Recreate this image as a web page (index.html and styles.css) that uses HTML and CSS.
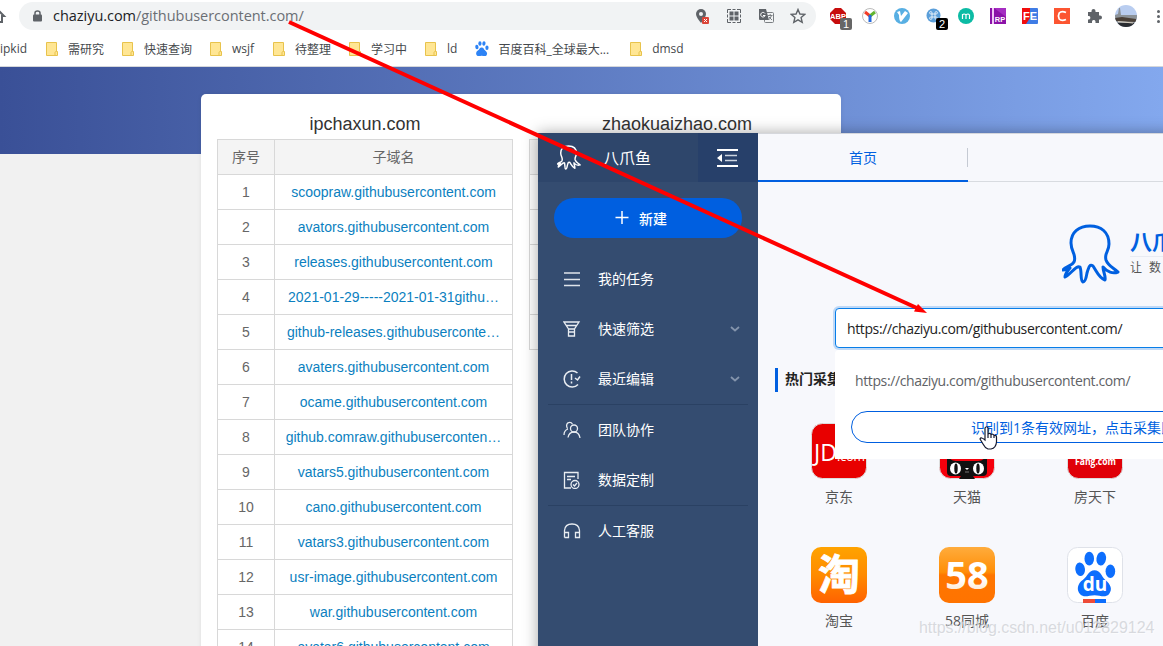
FILE: index.html
```html
<!DOCTYPE html>
<html lang="zh-CN">
<head>
    <meta charset="UTF-8">
    <meta name="viewport" content="width=device-width, initial-scale=1.0">
    <title>chaziyu.com/githubusercontent.com/</title>
    <link rel="stylesheet" href="styles.css">
</head>
<body>
    <svg class="defs" width="0" height="0">
        <symbol id="paw" viewBox="0 0 42 50">
            <ellipse cx="5" cy="19" rx="5" ry="7" transform="rotate(-8 5 19)"/>
            <ellipse cx="14.5" cy="8" rx="5" ry="7.2"/>
            <ellipse cx="27" cy="8" rx="5" ry="7.2" transform="rotate(8 27 8)"/>
            <ellipse cx="36.500" cy="21" rx="5" ry="7"/>
            <path d="M20 20C14 20 13 26 8 30C2 34 1 41 5 45C9 49 14 46 20 46C26 46 31 49 35 45C39 40 37 35 31 30C27 26 26 20 20 20Z"/>
        </symbol>
        <symbol id="octopus" viewBox="0 0 58 60">
            <path d="M12 38C15 31 9 28 9 19C9 8 17 2 28 2C39 2 47 8 47 20C47 28 42 29 44 36C46 42 52 44 56 48C51 50 45 48 41 43C41 48 44 52 43 56C37 54 35 48 31 42C28 40 27 42 25 49C24 55 23 58 21 58C18 57 20 48 18 43C14 41 9 50 3 53C3 49 6 47 8 44C5 46 3 46 1 46C4 42 10 42 12 38Z" fill="none" stroke="currentColor" stroke-linejoin="round"/>
        </symbol>
        <symbol id="folder" viewBox="0 0 12 14">
            <path d="M.5.500H10.500V9.500H11.500V13.500H.5Z" fill="#ffe694" stroke="#e8c34c"/>
            <path d="M9 13V10.500Q9 9.500 10.500 9.500" fill="none" stroke="#e8c34c"/>
        </symbol>
        <symbol id="chevron" viewBox="0 0 10 8">
            <path d="M1 2L5 5.500L9 2" fill="none" stroke="currentColor" stroke-width="1.800"/>
        </symbol>
    </svg>

    <!-- browser chrome -->
    <header class="browser">
        <div class="toolbar">
            <svg class="home" width="8" height="16" viewBox="0 0 8 16"><path d="M-6 8L-1 3L4 8H2V14H-1" fill="none" stroke="#5f6368" stroke-width="2"/></svg>
            <div class="omnibox">
                <svg class="lock" width="9" height="12" viewBox="0 0 9 12"><path d="M2 5V3Q2 1 4.500 1Q7 1 7 3V5" fill="none" stroke="#5f6368" stroke-width="1.500"/><rect y="4.500" width="9" height="7" rx="1" fill="#5f6368"/></svg>
                <div class="address">chaziyu.com<span>/githubusercontent.com/</span></div>
                <div class="page-actions">
                    <svg width="16" height="16" viewBox="0 0 16 16"><path d="M7 1A5 5 0 0 0 2 6Q2 9 7 15Q12 9 12 6A5 5 0 0 0 7 1Z" fill="#5f6368"/><circle cx="7" cy="6" r="2" fill="#f1f3f4"/><rect x="8" y="9" width="7" height="7" rx="1" fill="#db4437"/><path d="M10 11L13 14M13 11L10 14" stroke="#fff"/></svg>
                    <svg width="16" height="16" viewBox="0 0 16 16"><path d="M1.500 5V1.500H5M6.500 1.500H9.500M11 1.500H14.500V5M14.500 6.500V9.500M14.500 11V14.500H11M9.500 14.500H6.500M5 14.500H1.500V11M1.500 9.500V6.500" fill="none" stroke="#5f6368"/><path d="M3.500 3.500H7.500V7.500H3.500ZM8.500 3.500H12.500V7.500H8.500ZM3.500 8.500H7.500V12.500H3.500ZM8.500 8.500H12.500V12.500H8.500Z" fill="#5f6368"/></svg>
                    <svg width="16" height="16" viewBox="0 0 16 16"><rect x="6.500" y="4.500" width="9" height="10" rx="1" fill="#f1f3f4" stroke="#7b7f83"/><path d="M1 1H8L11 12H2Q1 12 1 11Z" fill="#5f6368"/><path d="M7 5.500A2.300 2.300 0 1 0 7.200 7.500H5" fill="none" stroke="#fff"/><path d="M10 7.500H14.500M12.200 6V7.500M13.500 7.500Q12.500 10.500 10.500 12M11 9L14 12" fill="none" stroke="#7b7f83"/></svg>
                    <svg width="16" height="16" viewBox="0 0 16 16"><path d="M8 1.500L9.900 6L14.700 6.400L11.100 9.600L12.200 14.300L8 11.800L3.800 14.300L4.900 9.600L1.300 6.400L6.100 6Z" fill="none" stroke="#5f6368" stroke-width="1.400"/></svg>
                </div>
            </div>
            <div class="extensions">
                <span class="ext"><svg width="16" height="16" viewBox="0 0 16 16"><path d="M5 0H11L16 5V11L11 16H5L0 11V5Z" fill="#c70d0d"/><text x="8" y="11" font-size="7.500" font-weight="bold" text-anchor="middle" fill="#fff">ABP</text></svg><b class="badge">1</b></span>
                <span class="ext"><svg width="16" height="16" viewBox="0 0 16 16"><circle cx="8" cy="8" r="7.500" fill="#fff" stroke="#bbb"/><path d="M8 8L3 4" stroke="#f33b28" stroke-width="3"/><path d="M8 8L13 4" stroke="#62b530" stroke-width="3"/><path d="M8 7V14" stroke="#2469dd" stroke-width="3"/></svg></span>
                <span class="ext"><svg width="16" height="16" viewBox="0 0 16 16"><circle cx="8" cy="8" r="8" fill="#58afe3"/><path d="M3 4L6 3L7 8L11 3L14 5L7 14Q5 13 5 7Z" fill="#fff"/></svg></span>
                <span class="ext"><svg width="16" height="16" viewBox="0 0 16 16"><circle cx="7.500" cy="7.500" r="7" fill="#5b9fda"/><path d="M6 6H9V9H6ZM6 6H4.800A1.200 1.200 0 1 1 6 4.800ZM9 6V4.800A1.200 1.200 0 1 1 10.200 6ZM6 9V10.200A1.200 1.200 0 1 1 4.800 9ZM9 9H10.200A1.200 1.200 0 1 1 9 10.200Z" fill="none" stroke="#fff" stroke-width=".8"/></svg><b class="badge dark">2</b></span>
                <span class="ext"><svg width="16" height="16" viewBox="0 0 16 16"><circle cx="8" cy="8" r="8" fill="#0cbba4"/><path d="M4.500 11V6M4.500 7Q6 5 8 7V11M8 7Q10 5 11.500 7V11" fill="none" stroke="#fff" stroke-width="1.200"/></svg></span>
                <span class="ext"><svg width="16" height="16" viewBox="0 0 16 16"><path d="M0 0H16V16H0Z" fill="#8b12a8"/><path d="M2 0H4V16H2Z" fill="#f0c8f5"/><path d="M4 0L16 9V0Z" fill="#a52dc2"/><text x="10" y="14" font-size="7.500" font-weight="bold" text-anchor="middle" fill="#fff">RP</text></svg></span>
                <span class="ext"><svg width="16" height="16" viewBox="0 0 16 16"><rect width="16" height="16" rx="1" fill="#3f7ce5"/><path d="M0 0H8V10L4 16H0Z" fill="#f10d0d"/><text x="8" y="12" font-size="11" font-weight="bold" text-anchor="middle" fill="#fff">FE</text></svg></span>
                <span class="ext"><svg width="16" height="16" viewBox="0 0 16 16"><rect width="16" height="16" fill="#fc5531"/><path d="M12 4.500Q7.500 2.500 5.200 5Q3.600 8 5.200 11Q7.500 13.500 12 11.500" fill="none" stroke="#fff" stroke-width="1.700"/></svg></span>
                <span class="ext"><svg width="16" height="16" viewBox="0 0 16 16"><path d="M2 4H5.500V3A2 2 0 0 1 9.500 3V4H13V7.500H14A2 2 0 0 1 14 11.500H13V15H9.500V13.500A1.800 1.800 0 0 0 6 13.500V15H2V11.500H3A1.800 1.800 0 0 0 3 8H2Z" fill="#5f6368"/></svg></span>
                <span class="avatar"><svg width="22" height="22" viewBox="0 0 22 22"><path d="M0 10L3 9L4 3H5L6 10H22V22H0Z" fill="#8c9298"/><path d="M0 13L7 12L21 14V17L0 16Z" fill="#4a4038"/><path d="M0 18H22V22H0Z" fill="#292c31"/><path d="M3 16.500L18 18" stroke="#d4cbbc"/></svg></span>
                <span class="dots"><i></i><i></i><i></i></span>
            </div>
        </div>
        <nav class="bookmarks">
            <a class="first">ipkid</a>
            <a><svg width="12" height="14"><use href="#folder"/></svg>需研究</a>
            <a><svg width="12" height="14"><use href="#folder"/></svg>快速查询</a>
            <a class="wsjf"><svg width="12" height="14"><use href="#folder"/></svg>wsjf</a>
            <a><svg width="12" height="14"><use href="#folder"/></svg>待整理</a>
            <a><svg width="12" height="14"><use href="#folder"/></svg>学习中</a>
            <a><svg width="12" height="14"><use href="#folder"/></svg>ld</a>
            <a class="baike"><svg width="14" height="16" fill="#2d83f5"><use href="#paw"/></svg>百度百科_全球最大...</a>
            <a><svg width="12" height="14"><use href="#folder"/></svg>dmsd</a>
        </nav>
    </header>

    <!-- subdomain lookup page -->
    <main class="page">
        <div class="card">
            <section class="result">
                <h2>ipchaxun.com</h2>
                <table>
                    <thead>
                        <tr><th class="num">序号</th><th>子域名</th></tr>
                    </thead>
                    <tbody>
                        <tr><td>1</td><td><a>scoopraw.githubusercontent.com</a></td></tr>
                        <tr><td>2</td><td><a>avators.githubusercontent.com</a></td></tr>
                        <tr><td>3</td><td><a>releases.githubusercontent.com</a></td></tr>
                        <tr><td>4</td><td><a>2021-01-29-----2021-01-31githu…</a></td></tr>
                        <tr><td>5</td><td><a>github-releases.githubuserconte…</a></td></tr>
                        <tr><td>6</td><td><a>avaters.githubusercontent.com</a></td></tr>
                        <tr><td>7</td><td><a>ocame.githubusercontent.com</a></td></tr>
                        <tr><td>8</td><td><a>github.comraw.githubuserconten…</a></td></tr>
                        <tr><td>9</td><td><a>vatars5.githubusercontent.com</a></td></tr>
                        <tr><td>10</td><td><a>cano.githubusercontent.com</a></td></tr>
                        <tr><td>11</td><td><a>vatars3.githubusercontent.com</a></td></tr>
                        <tr><td>12</td><td><a>usr-image.githubusercontent.com</a></td></tr>
                        <tr><td>13</td><td><a>war.githubusercontent.com</a></td></tr>
                        <tr><td>14</td><td><a>avatar6.githubusercontent.com</a></td></tr>
                    </tbody>
                </table>
            </section>
            <section class="result">
                <h2>zhaokuaizhao.com</h2>
                <table>
                    <thead>
                        <tr><th class="num"></th><th></th></tr>
                    </thead>
                    <tbody>
                        <tr><td></td><td></td></tr>
                        <tr><td></td><td></td></tr>
                        <tr><td></td><td></td></tr>
                        <tr><td></td><td></td></tr>
                        <tr><td></td><td></td></tr>
                    </tbody>
                </table>
            </section>
        </div>
    </main>

    <!-- octopus collector window -->
    <div class="window">
        <aside class="sidebar">
            <div class="side-head">
                <svg class="side-logo" width="24" height="25"><use href="#octopus"/></svg>
                <span class="side-name">八爪鱼</span>
                <div class="collapse">
                    <svg width="22" height="20" viewBox="0 0 22 20"><path d="M0 2H21M0 18H21" stroke="#fff" stroke-width="2"/><path d="M8 7.500H20M8 12.500H20" stroke="#ccd4e0" stroke-width="1.500"/><path d="M0 10L5 6V14Z" fill="#fff"/></svg>
                </div>
            </div>
            <button class="new-btn"><svg width="14" height="14" viewBox="0 0 14 14"><path d="M7 0V13M.5 6.500H13.500" stroke="#fff" stroke-width="1.500"/></svg>新建</button>
            <ul class="menu">
                <li><svg width="18" height="18" viewBox="0 0 18 18"><path d="M1 3H17M1 9.500H17M1 15.500H17" stroke="#dfe4ea" stroke-width="1.700"/></svg><span>我的任务</span></li>
                <li><svg width="18" height="18" viewBox="0 0 18 18"><path d="M1 2H16L11.500 9V16H5.500V9ZM3 5.500H14M5.500 9H11.500M6 12H11" fill="none" stroke="#e9edf2" stroke-width="1.300"/></svg><span>快速筛选</span><svg class="arrow" width="10" height="8"><use href="#chevron"/></svg></li>
                <li><svg width="18" height="18" viewBox="0 0 18 18"><path d="M14.500 3A8 8 0 1 0 15 14.500M8.500 4V10M8.500 11.500V13.500M12 8L14.500 10L17 6.500" fill="none" stroke="#e9edf2" stroke-width="1.500"/></svg><span>最近编辑</span><svg class="arrow" width="10" height="8"><use href="#chevron"/></svg></li>
                <li class="split"><svg width="18" height="18" viewBox="0 0 18 18"><circle cx="11" cy="7.500" r="3.500"/><path d="M5 16.500Q6 11 11 11Q16 11 17 17M9.500 3.200Q8 .5 5 1.800Q2.500 4 4.500 7.500M1 14Q1 9.500 5 8"/></svg><span>团队协作</span></li>
                <li><svg width="18" height="18" viewBox="0 0 18 18"><path d="M8 17H1.500V1.500H15V8M4 5.500H12M4 8.500H8"/><circle cx="12" cy="13.500" r="4"/><path d="M10 13.500L11.500 15L14 12"/></svg><span>数据定制</span></li>
                <li class="split"><svg width="18" height="18" viewBox="0 0 18 18"><path d="M1.500 15.500V8.500Q2 2 9 2Q16 2 16.500 8.500V15.500H12.500V10.500H16.500M1.500 10.500H5.500V15.500H1.500"/></svg><span>人工客服</span></li>
            </ul>
        </aside>
        <div class="content">
            <div class="tabs"><div class="tab">首页</div></div>
            <div class="brand">
                <svg class="brand-logo" width="58" height="60"><use href="#octopus"/></svg>
                <div class="brand-text">
                    <div class="brand-name">八爪鱼</div>
                    <div class="slogan">让数据</div>
                </div>
            </div>
            <div class="search">
                <div class="search-input">https://chaziyu.com/githubusercontent.com/</div>
                <div class="dropdown">
                    <div class="suggest">https://chaziyu.com/githubusercontent.com/</div>
                    <div class="go">识别到1条有效网址，点击采集即可</div>
                </div>
            </div>
            <h3 class="hot">热门采集</h3>
            <div class="sites">
                <div class="site">
                    <svg width="56" height="56" viewBox="0 0 56 56"><rect x=".5" y=".5" width="55" height="55" rx="11" fill="#e80000" stroke="#ddd"/><text x="3" y="38" font-size="24" textLength="23" lengthAdjust="spacingAndGlyphs" fill="#fff">JD</text><text x="26" y="38" font-size="13" textLength="28" lengthAdjust="spacingAndGlyphs" fill="#fff">.com</text></svg>
                    <span>京东</span>
                </div>
                <div class="site">
                    <svg width="56" height="56" viewBox="0 0 56 56"><rect x=".5" y=".5" width="55" height="55" rx="11" fill="#f5000c" stroke="#ddd"/><path d="M8 30Q10 38 17 38H39Q46 38 48 30V49Q48 53 44 53H34L36 56H20L22 53H12Q8 53 8 49Z" fill="#111"/><ellipse cx="16.500" cy="45.500" rx="5.500" ry="6" fill="#fff"/><ellipse cx="39.500" cy="45.500" rx="5.500" ry="6" fill="#fff"/><ellipse cx="17" cy="45.500" rx="1.700" ry="5" fill="#111"/><ellipse cx="39" cy="45.500" rx="1.700" ry="5" fill="#111"/><path d="M26 45H30L28 47Z" fill="#fff"/><path d="M26 49H30" stroke="#777"/></svg>
                    <span>天猫</span>
                </div>
                <div class="site">
                    <svg width="56" height="56" viewBox="0 0 56 56"><rect x=".5" y=".5" width="55" height="55" rx="11" fill="#e00008" stroke="#ddd"/><text x="8" y="42" font-size="10.500" font-weight="bold" textLength="41" lengthAdjust="spacingAndGlyphs" fill="#fff">Fang.com</text></svg>
                    <span>房天下</span>
                </div>
                <div class="site">
                    <svg width="56" height="56" viewBox="0 0 56 56"><defs><linearGradient id="tb" x2="0" y2="1"><stop stop-color="#ffa300"/><stop offset=".5" stop-color="#ff8b00"/><stop offset="1" stop-color="#ff6200"/></linearGradient></defs><rect width="56" height="56" rx="10" fill="url(#tb)"/><text class="tao" x="28" y="43" font-size="42" text-anchor="middle" fill="#fff" stroke="#fff" stroke-width=".8">淘</text></svg>
                    <span>淘宝</span>
                </div>
                <div class="site">
                    <svg width="56" height="56" viewBox="0 0 56 56"><defs><linearGradient id="tc" x2="0" y2="1"><stop stop-color="#ffac3c"/><stop offset=".45" stop-color="#ff8e07"/><stop offset=".5" stop-color="#ff7600"/><stop offset="1" stop-color="#ff7300"/></linearGradient><linearGradient id="n58" x2="0" y2="1"><stop offset=".6" stop-color="#fff"/><stop offset="1" stop-color="#ffd7ad"/></linearGradient></defs><rect width="56" height="56" rx="10" fill="url(#tc)"/><text class="n58" x="28" y="42" font-size="38" font-weight="bold" text-anchor="middle" fill="url(#n58)">58</text></svg>
                    <span>58同城</span>
                </div>
                <div class="site">
                    <svg width="56" height="56" viewBox="0 0 56 56"><rect x=".5" y=".5" width="55" height="55" rx="10" fill="#fff" stroke="#dfe2e9"/><use href="#paw" x="8" y="4" width="41" height="48" fill="#0d6efd"/><text x="28" y="44" font-size="19" font-weight="bold" text-anchor="middle" fill="#fff">du</text><path d="M16 52H28V56H16Z" fill="#ee4b37"/><path d="M28 52H39V56H28Z" fill="#0d6efd"/></svg>
                    <span>百度</span>
                </div>
            </div>
        </div>
    </div>

    <svg class="pointer" width="20" height="25" viewBox="0 0 20 25"><path d="M6 15V3Q7.500.5 9 3V9Q11 7.500 12 9.500Q14 8.500 15 10.500Q17.500 10 17.500 12V17Q17 23 12 24H9Q6 23 4 19L1 14Q2 11.500 6 15ZM9 9V13M12 9.500V13M15 10.500V13" fill="#fff" stroke="#14182e" stroke-width="1.200"/></svg>
    <svg class="red-line" width="1163" height="646" viewBox="0 0 1163 646"><path d="M289 22L918 308.500" stroke="#f00" stroke-width="4"/><path d="M927 313L914 311.500L918 304Z" fill="#f00"/></svg>
    <div class="watermark">https://blog.csdn.net/u012829124</div>
</body>
</html>
```

FILE: styles.css
```css
* {
    box-sizing: border-box;
}

html {
    overflow: hidden;
}

body {
    position: relative;
    width: 1163px;
    height: 646px;
    margin: 0;
    overflow: hidden;
    background: #f1f1f1;
    font-family: "Open Sans", "Noto Sans CJK SC", sans-serif;
    color: #333;
}

svg {
    flex: none;
}

.defs {
    position: absolute;
}

/* browser */
.browser {
    height: 67px;
    background: #fff;
    border-bottom: 1px solid #d5d7db;
}

.toolbar {
    display: flex;
    align-items: center;
    height: 32px;
}

.home {
    margin-right: 11px;
}

.omnibox {
    display: flex;
    align-items: center;
    width: 797px;
    height: 28px;
    padding: 0 10px 0 14px;
    border-radius: 14px;
    background: #f1f3f4;
}

.address {
    margin-left: 11px;
    font-size: 14.500px;
    letter-spacing: -0.040px;
    line-height: 20px;
    color: #202124;
}

.address span {
    color: #6b6f74;
}

.page-actions {
    display: flex;
    gap: 16px;
    margin-left: auto;
}

.extensions {
    display: flex;
    align-items: center;
    margin-left: 6px;
}

.ext,
.avatar {
    position: relative;
    display: flex;
    justify-content: center;
    flex: none;
    width: 32px;
}

.ext text {
    font-family: "Liberation Sans", Arial, sans-serif;
}

.avatar svg {
    border-radius: 50%;
    background: #b9cdf0;
}

.badge {
    position: absolute;
    left: 18px;
    top: 10px;
    width: 12px;
    height: 12px;
    border-radius: 2px;
    background: #666;
    color: #fff;
    font: 11px/12px "Liberation Sans", Arial, sans-serif;
    text-align: center;
}

.badge.dark {
    background: #000;
}

.dots {
    display: flex;
    flex-direction: column;
    gap: 2px;
    margin-left: 15px;
}

.dots i {
    width: 3px;
    height: 3px;
    border-radius: 50%;
    background: #5f6368;
}

.bookmarks {
    display: flex;
    align-items: center;
    height: 33px;
    gap: 18px;
    font-size: 12px;
    white-space: nowrap;
    color: #45494d;
}

.bookmarks a {
    display: flex;
    align-items: center;
    gap: 10px;
}

.bookmarks .first {
    width: 28px;
}

.bookmarks .wsjf {
    width: 45px;
}

.bookmarks .baike {
    gap: 9px;
    margin-right: 3px;
}

/* page */
.page {
    height: 579px;
    padding-top: 27px;
    overflow: hidden;
    background: linear-gradient(90deg, #3a5097, #83a8ee) no-repeat;
    background-size: 100% 87px;
}

.card {
    display: flex;
    gap: 16px;
    width: 640px;
    height: 600px;
    margin-left: 201px;
    padding: 16px;
    border-radius: 5px;
    background: #fff;
    box-shadow: 0 0 4px rgba(0, 0, 0, 0.08);
    font-family: "Liberation Sans", Arial, "Noto Sans CJK SC", sans-serif;
}

.result {
    width: 296px;
}

.result h2 {
    height: 29px;
    margin: 0;
    font-size: 18px;
    font-weight: normal;
    line-height: 28px;
    text-align: center;
}

.result table {
    width: 296px;
    border-collapse: collapse;
    table-layout: fixed;
    font-size: 14px;
    color: #666;
}

.result th,
.result td {
    height: 35px;
    padding: 0 8px;
    border: 1px solid #d8d8d8;
    white-space: nowrap;
    font-weight: normal;
    line-height: 20px;
    text-align: center;
}

.result th {
    background: #f4f4f4;
}

.result th.num {
    width: 57px;
}

.result a {
    color: #0b7fc0;
}

/* app window */
.window {
    position: absolute;
    left: 538px;
    top: 133px;
    display: flex;
    width: 1000px;
    height: 640px;
    background: #f7f8fc;
    box-shadow: 0 0 14px rgba(0, 0, 0, 0.35);
}

.sidebar {
    width: 220px;
    background: #344c70;
    color: #fff;
}

.side-head {
    display: flex;
    align-items: center;
    height: 49px;
    padding-left: 19px;
    background: #2e466b;
}

.side-logo {
    color: #fff;
    stroke-width: 3.500;
}

.side-name {
    margin-left: 22px;
    padding-bottom: 2px;
    font-size: 16px;
}

.collapse {
    display: flex;
    align-items: center;
    justify-content: center;
    width: 60px;
    height: 49px;
    margin-left: auto;
    background: #27406a;
}

.new-btn {
    display: flex;
    align-items: center;
    justify-content: center;
    gap: 10px;
    width: 188px;
    height: 40px;
    margin: 16px;
    padding: 0 14px 0 0;
    border: none;
    border-radius: 20px;
    background: #005fe0;
    color: #fff;
    font: 500 14px "Noto Sans CJK SC", sans-serif;
}

.menu {
    margin: 0;
    padding: 0 10px;
    list-style: none;
}

.menu li {
    display: flex;
    align-items: center;
    gap: 17px;
    height: 50px;
    padding-left: 15px;
    font-size: 14px;
}

.menu li.split {
    height: 51px;
    border-top: 1px solid #2a4163;
}

.menu li span {
    padding-bottom: 2px;
}

.menu li svg {
    fill: none;
    stroke: #e9edf2;
    stroke-width: 1.300;
}

.menu .arrow {
    margin-left: auto;
    margin-right: 8px;
    color: #8494ac;
}

.content {
    width: 780px;
}

.tabs {
    height: 49px;
    border-top: 1px solid #d5d7dc;
    border-bottom: 1px solid #d8dbe0;
}

.tab {
    width: 210px;
    height: 48px;
    border-bottom: 2px solid #005fe0;
    background: linear-gradient(#c5cad3, #c5cad3) no-repeat right 14px / 1px 19px;
    color: #005fe0;
    font-size: 14px;
    line-height: 47px;
    text-align: center;
}

.brand {
    display: flex;
    gap: 10px;
    height: 126px;
    padding: 42px 0 0 304px;
}

.brand-logo {
    color: #0060e0;
    stroke-width: 3;
}

.brand-text {
    width: 160px;
    padding-top: 3px;
}

.brand-name {
    color: #0060e0;
    font-size: 22px;
    font-weight: bold;
    line-height: 29px;
    border-bottom: 1px solid #e8ebf2;
}

.slogan {
    margin-top: 1px;
    font-size: 12px;
    letter-spacing: 7px;
    line-height: 20px;
    white-space: nowrap;
    color: #555;
}

.search {
    position: relative;
    width: 600px;
    margin-left: 77px;
}

.search-input {
    height: 40px;
    padding-left: 11px;
    border: 1px solid #087ee8;
    border-radius: 4px;
    background: #fff;
    box-shadow: 0 0 0 2px #bfd9f7;
    font-size: 14px;
    letter-spacing: -0.380px;
    line-height: 40px;
    color: #222;
}

.dropdown {
    position: absolute;
    left: 0;
    top: 42px;
    width: 600px;
    height: 109px;
    padding: 21px 16px;
    border-radius: 4px 4px 0 0;
    background: #fff;
}

.suggest {
    padding-left: 4px;
    font-size: 14px;
    letter-spacing: -0.380px;
    line-height: 20px;
    color: #606266;
}

.go {
    height: 32px;
    margin-top: 20px;
    padding-left: 119px;
    border: 1px solid #005fe0;
    border-radius: 16px;
    font-size: 14px;
    line-height: 31px;
    color: #005fe0;
}

.hot {
    height: 24px;
    margin: 20px 0 0 17px;
    padding-left: 7px;
    border-left: 3px solid #005fe0;
    font-size: 14px;
    line-height: 21px;
    color: #222;
}

.sites {
    display: grid;
    grid-template-columns: repeat(3, 128px);
    grid-auto-rows: 124px;
    margin: 31px 0 0 17px;
}

.site {
    display: flex;
    flex-direction: column;
    align-items: center;
    font-size: 14px;
    color: #555;
}

.site span {
    margin-top: 8px;
    line-height: 20px;
}

.site .tao {
    font-family: "Noto Sans CJK SC", sans-serif;
    font-weight: bold;
}

.site .n58 {
    font-family: "Open Sans", sans-serif;
}

/* things drawn over everything else */
.pointer {
    position: absolute;
    left: 979px;
    top: 425px;
}

.red-line {
    position: absolute;
    left: 0;
    top: 0;
}

.watermark {
    position: absolute;
    left: 919px;
    top: 618px;
    font: 16px/20px "Liberation Sans", Arial, sans-serif;
    letter-spacing: -0.040px;
    color: rgba(205, 207, 212, 0.75);
    text-shadow: 1px 1px 0 rgba(255, 255, 255, 0.6);
}
```
